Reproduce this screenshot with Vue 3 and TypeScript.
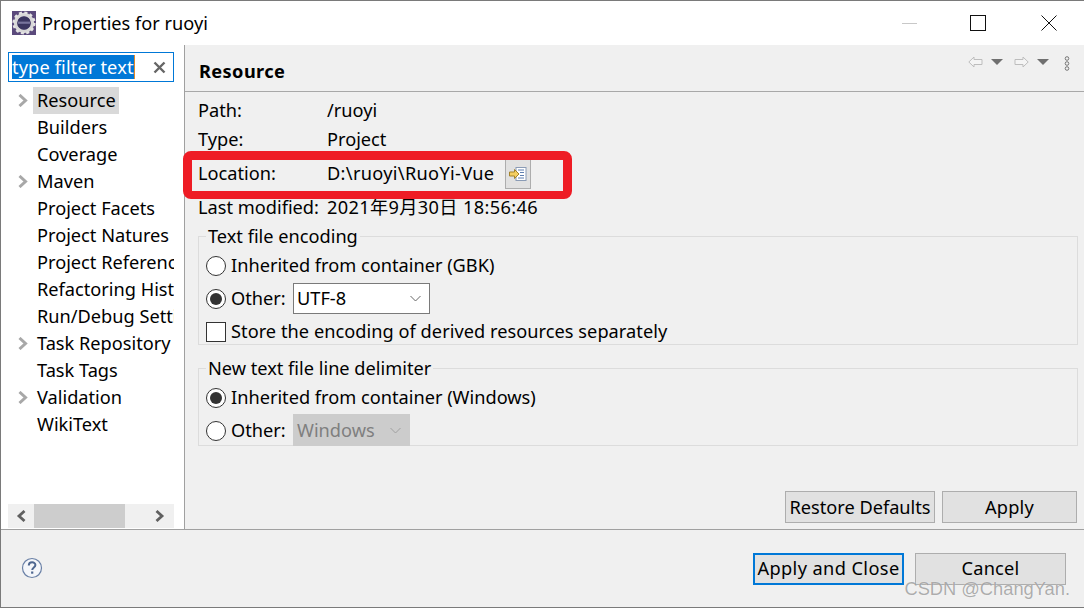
<script setup lang="ts">
const tree = [
  { label: 'Resource', arrow: true, selected: true },
  { label: 'Builders' },
  { label: 'Coverage' },
  { label: 'Maven', arrow: true },
  { label: 'Project Facets' },
  { label: 'Project Natures' },
  { label: 'Project References' },
  { label: 'Refactoring History' },
  { label: 'Run/Debug Settings' },
  { label: 'Task Repository', arrow: true },
  { label: 'Task Tags' },
  { label: 'Validation', arrow: true },
  { label: 'WikiText' },
]
</script>

<template>
  <div class="window">
    <header class="titlebar">
      <svg class="appicon" width="24" height="24" viewBox="0 0 24 24">
        <rect width="24" height="24" fill="#5b4a7c" />
        <circle cx="12" cy="12" r="8.5" fill="none" stroke="#d8d8d8" stroke-width="3.4" />
        <circle cx="12" cy="12" r="10.4" fill="none" stroke="#e4e4e4" stroke-width="2.4" stroke-dasharray="3 2.45" />
        <circle cx="12" cy="12" r="6.6" fill="#3a3560" />
        <rect x="6" y="10.6" width="12" height="2.2" fill="#77739c" />
      </svg>
      <span class="title">Properties for ruoyi</span>
      <div class="winbtns">
        <span class="minimize"></span>
        <span class="maximize"></span>
        <svg width="16" height="16" viewBox="0 0 16 16"><path d="M.5.5l15 15M15.500.5l-15 15" stroke="#111" fill="none" /></svg>
      </div>
    </header>

    <div class="main">
      <aside class="sidebar">
        <div class="filter">
          <span class="filter-text">type filter text</span>
          <svg class="clear" width="13" height="13" viewBox="0 0 13 13"><path d="M1.500 1.500l10 10M11.500 1.500l-10 10" stroke="#666" stroke-width="2.400" fill="none" /></svg>
        </div>
        <ul class="tree">
          <li v-for="item in tree" :key="item.label" class="node">
            <svg v-if="item.arrow" class="twist" width="10" height="13" viewBox="0 0 10 13"><path d="M1.500 1l6 5.500-6 5.500" stroke="#a8a8a8" stroke-width="3" fill="none" /></svg>
            <span class="node-label" :class="{ selected: item.selected }">{{ item.label }}</span>
          </li>
        </ul>
        <div class="hscroll">
          <svg class="sarrow" width="10" height="12" viewBox="0 0 10 12"><path d="M8.500 1L3 6l5.500 5" stroke="#606060" stroke-width="2.800" fill="none" /></svg>
          <span class="thumb"></span>
          <svg class="sarrow" width="10" height="12" viewBox="0 0 10 12"><path d="M1.500 1L7 6l-5.500 5" stroke="#606060" stroke-width="2.800" fill="none" /></svg>
        </div>
      </aside>

      <section class="content">
        <div class="content-head">
          <h1 class="heading">Resource</h1>
          <div class="nav">
            <svg width="15" height="12" viewBox="0 0 15 12"><path d="M.8 6L6 1v2.500h8v5H6V11z" fill="#f4f4f4" stroke="#bdbdbd" /></svg>
            <svg class="drop" width="12" height="6" viewBox="0 0 12 6"><path d="M0 0h12L6 6z" fill="#6f6f6f" /></svg>
            <svg class="fwd" width="15" height="12" viewBox="0 0 15 12"><path d="M14.200 6L9 1v2.500H1v5h8V11z" fill="#f4f4f4" stroke="#bdbdbd" /></svg>
            <svg class="drop" width="12" height="6" viewBox="0 0 12 6"><path d="M0 0h12L6 6z" fill="#6f6f6f" /></svg>
            <svg class="more" width="6" height="15" viewBox="0 0 6 15"><g fill="none" stroke="#777"><circle cx="3" cy="2.500" r="1.800" /><circle cx="3" cy="7.500" r="1.800" /><circle cx="3" cy="12.500" r="1.800" /></g></svg>
          </div>
        </div>

        <div class="props">
          <div class="prop prop-path"><span class="key">Path:</span><span>/ruoyi</span></div>
          <div class="prop prop-type"><span class="key">Type:</span><span>Project</span></div>
          <div class="prop prop-loc">
            <span class="key">Location:</span><span class="wide">D:\ruoyi\RuoYi-Vue</span>
            <button class="open" type="button" aria-label="Show in explorer">
              <svg width="18" height="14" viewBox="0 0 18 14">
                <rect x="7" y=".5" width="10" height="13" fill="#fff" stroke="#8a9bb5" />
                <path d="M9 3h6M11 5.500h4M11 8.500h4M9 11h6" stroke="#5f7fb0" />
                <path d="M.5 5h5V2.500L10 7l-4.500 4.500V9h-5z" fill="#f5cf62" stroke="#a5832a" />
              </svg>
            </button>
          </div>
          <div class="prop prop-mod"><span class="key">Last modified:</span><span class="wider">2021年9月30日 18:56:46</span></div>
        </div>

        <fieldset class="group group-enc">
          <legend>Text file encoding</legend>
          <label class="line"><span class="radio"></span>Inherited from container (GBK)</label>
          <div class="line">
            <span class="radio on"></span><span class="other">Other:</span>
            <span class="combo">UTF-8
              <svg width="11" height="7" viewBox="0 0 11 7"><path d="M.5 1l5 5 5-5" stroke="#666" fill="none" /></svg>
            </span>
          </div>
          <label class="line line-store"><span class="check"></span>Store the encoding of derived resources separately</label>
        </fieldset>

        <fieldset class="group group-delim">
          <legend>New text file line delimiter</legend>
          <label class="line"><span class="radio on"></span>Inherited from container (Windows)</label>
          <div class="line">
            <span class="radio"></span><span class="other">Other:</span>
            <span class="combo disabled">Windows
              <svg width="11" height="7" viewBox="0 0 11 7"><path d="M.5 1l5 5 5-5" stroke="#a0a0a0" fill="none" /></svg>
            </span>
          </div>
        </fieldset>

        <div class="content-actions">
          <button class="btn restore" type="button">Restore Defaults</button>
          <button class="btn apply" type="button">Apply</button>
        </div>
      </section>
    </div>

    <footer class="footer">
      <svg class="help" width="22" height="22" viewBox="0 0 22 22">
        <circle cx="11" cy="11" r="9.500" fill="#f4f6fa" stroke="#6a80a6" stroke-width="1.200" />
        <path d="M7.800 8.500c0-4.200 6.600-4.200 6.600-.4 0 2.400-3.200 2.500-3.200 5" fill="none" stroke="#4d6690" stroke-width="2" />
        <rect x="10.100" y="14.500" width="2.200" height="2.200" fill="#4d6690" />
      </svg>
      <div class="footer-actions">
        <button class="btn primary" type="button">Apply and Close</button>
        <button class="btn cancel" type="button">Cancel</button>
      </div>
    </footer>

    <div class="callout"></div>
    <div class="watermark">CSDN @ChangYan.</div>
  </div>
</template>

<style>
html, body { margin: 0; padding: 0; background: #f0f0f0; }
</style>

<style scoped>
.window {
  position: relative;
  box-sizing: border-box;
  width: 1084px;
  height: 608px;
  display: flex;
  flex-direction: column;
  overflow: hidden;
  border-top: 1px solid #7a7a7a;
  border-left: 1px solid #7a7a7a;
  border-bottom: 1px solid #7a7a7a;
  background: #f0f0f0;
  color: #000;
  font-family: "Noto Sans", "Noto Sans CJK SC", sans-serif;
  font-size: 18.2px;
  line-height: 27px;
}
.titlebar {
  flex: none;
  height: 44px;
  display: flex;
  align-items: center;
  background: #fff;
  padding-left: 11px;
}
.appicon { flex: none; }
.title { margin-left: 6px; }
.winbtns { margin-left: auto; display: flex; align-items: center; padding-right: 27px; }
.minimize { width: 15px; height: 1px; background: #c8c8c8; }
.maximize { width: 14px; height: 14px; border: 1px solid #111; margin: 0 55px 0 53px; }

.main { flex: none; height: 484px; display: flex; }
.sidebar {
  box-sizing: border-box;
  flex: none;
  width: 184px;
  padding: 7px 10px 0 7px;
  background: #fff;
  border-right: 1px solid #a0a0a0;
  display: flex;
  flex-direction: column;
}
.filter {
  box-sizing: border-box;
  height: 30px;
  width: 166px;
  border: 1px solid #0078d7;
  display: flex;
  align-items: center;
  padding-left: 3px;
}
.filter-text { background: #0078d7; color: #fff; height: 24px; line-height: 24px; border-right: 1px solid #e08a2a; white-space: nowrap; letter-spacing: .14px; }
.clear { margin-left: auto; margin-right: 7px; }
.tree { list-style: none; margin: 5px 0 0; padding: 0; height: 417px; overflow: hidden; }
.node { position: relative; height: 27px; padding-left: 25px; white-space: nowrap; overflow: hidden; display: flex; align-items: center; }
.twist { position: absolute; left: 10px; top: 7px; }
.node-label { display: inline-block; padding: 0 3px 0 4px; height: 27px; }
.selected { background: #d9d9d9; }
.hscroll { flex: none; height: 24px; background: #f0f0f0; display: flex; align-items: center; }
.sarrow { flex: none; margin: 0 8px; }
.thumb { flex: none; height: 24px; width: 91px; background: #cdcdcd; }
.hscroll .sarrow:last-child { margin-left: auto; margin-right: 9px; }

.content { flex: 1; min-width: 0; display: flex; flex-direction: column; padding: 0 6px 0 13px; }
.content-head {
  height: 46px;
  margin: 0 -6px 0 -13px;
  padding: 0 11px 0 14px;
  border-bottom: 1px solid #a8a8a8;
  display: flex;
  justify-content: space-between;
  box-sizing: content-box;
}
.heading { margin: 0; font-size: 18.2px; font-weight: 700; line-height: 52px; letter-spacing: .4px; }
.nav { display: flex; align-items: flex-start; padding-top: 11px; padding-right: 3px; }
.drop { margin: 3px 0 0 8px; }
.fwd { margin-left: 11px; }
.more { margin-left: 15px; }
.props { display: flex; flex-direction: column; margin-top: 5px; }
.prop { display: flex; align-items: center; height: 27px; }
.key { width: 129px; flex: none; }
.wide { letter-spacing: .32px; }
.wider { letter-spacing: .35px; }
.prop-type { margin-top: 2px; }
.prop-loc { margin-top: 7px; }
.prop-mod { margin-top: 7px; }
.open {
  box-sizing: border-box;
  width: 26px; height: 30px;
  margin-left: 11px;
  padding: 0;
  background: #e1e1e1;
  border: 1px solid #adadad;
  display: flex; align-items: center; justify-content: center;
}
.group {
  margin: 0;
  padding: 0 8px 0 7px;
  border: 1px solid #dcdcdc;
  box-sizing: border-box;
  min-width: 0;
}
.group legend { padding: 0 2px; margin: 0 0 -1px 0; line-height: 27px; }
.group-enc { height: 122px; margin-top: 2px; }
.group-delim { height: 91px; margin-top: 10px; }
.line { display: flex; align-items: center; height: 33px; }
.line-store { letter-spacing: .04px; }
.radio {
  box-sizing: border-box;
  flex: none;
  width: 20px; height: 20px;
  margin-right: 5px;
  border: 1px solid #333;
  border-radius: 50%;
  background: #fff;
  position: relative;
}
.radio.on::after {
  content: "";
  position: absolute;
  left: 3px; top: 3px;
  width: 12px; height: 12px;
  border-radius: 50%;
  background: #333;
}
.check {
  box-sizing: border-box;
  flex: none;
  width: 20px; height: 20px;
  margin-right: 5px;
  border: 1px solid #333;
  background: #fff;
}
.other { width: 62px; flex: none; }
.combo {
  box-sizing: border-box;
  width: 137px; height: 31px;
  padding: 0 8px 0 3px;
  display: flex; align-items: center; justify-content: space-between;
  background: #fff;
  border: 1px solid #7a7a7a;
}
.combo.disabled { width: 117px; height: 32px; margin-bottom: 1px; background: #cccccc; border-color: #cccccc; color: #7f7f7f; }
.content-actions { margin-top: auto; display: flex; justify-content: flex-end; gap: 7px; padding: 0 1px 6px 0; }
.btn {
  box-sizing: border-box;
  height: 32px;
  padding: 0;
  font: inherit;
  letter-spacing: .2px;
  color: #000;
  background: #e1e1e1;
  border: 1px solid #adadad;
}
.restore { width: 150px; letter-spacing: 0; }
.apply { width: 135px; }
.footer {
  flex: 1;
  border-top: 1px solid #a0a0a0;
  display: flex;
  align-items: center;
  justify-content: space-between;
  padding: 0 18px 0 20px;
}
.help { flex: none; margin-bottom: 2px; }
.footer-actions { display: flex; gap: 11px; }
.primary { width: 151px; border: 2px solid #0078d7; letter-spacing: .4px; }
.cancel { width: 151px; }

.callout {
  position: absolute;
  left: 182px; top: 150px;
  width: 389px; height: 48px;
  box-sizing: border-box;
  border: 9px solid #ee1c25;
  border-bottom-width: 8px;
  border-radius: 8px;
  pointer-events: none;
}
.watermark {
  position: absolute;
  right: 14px; bottom: 7px;
  font-family: "Liberation Sans", sans-serif;
  font-size: 18.3px;
  line-height: 22px;
  color: rgba(120, 120, 120, .6);
  text-shadow: 0 0 1px rgba(255, 255, 255, .8);
  white-space: nowrap;
  pointer-events: none;
}
</style>
